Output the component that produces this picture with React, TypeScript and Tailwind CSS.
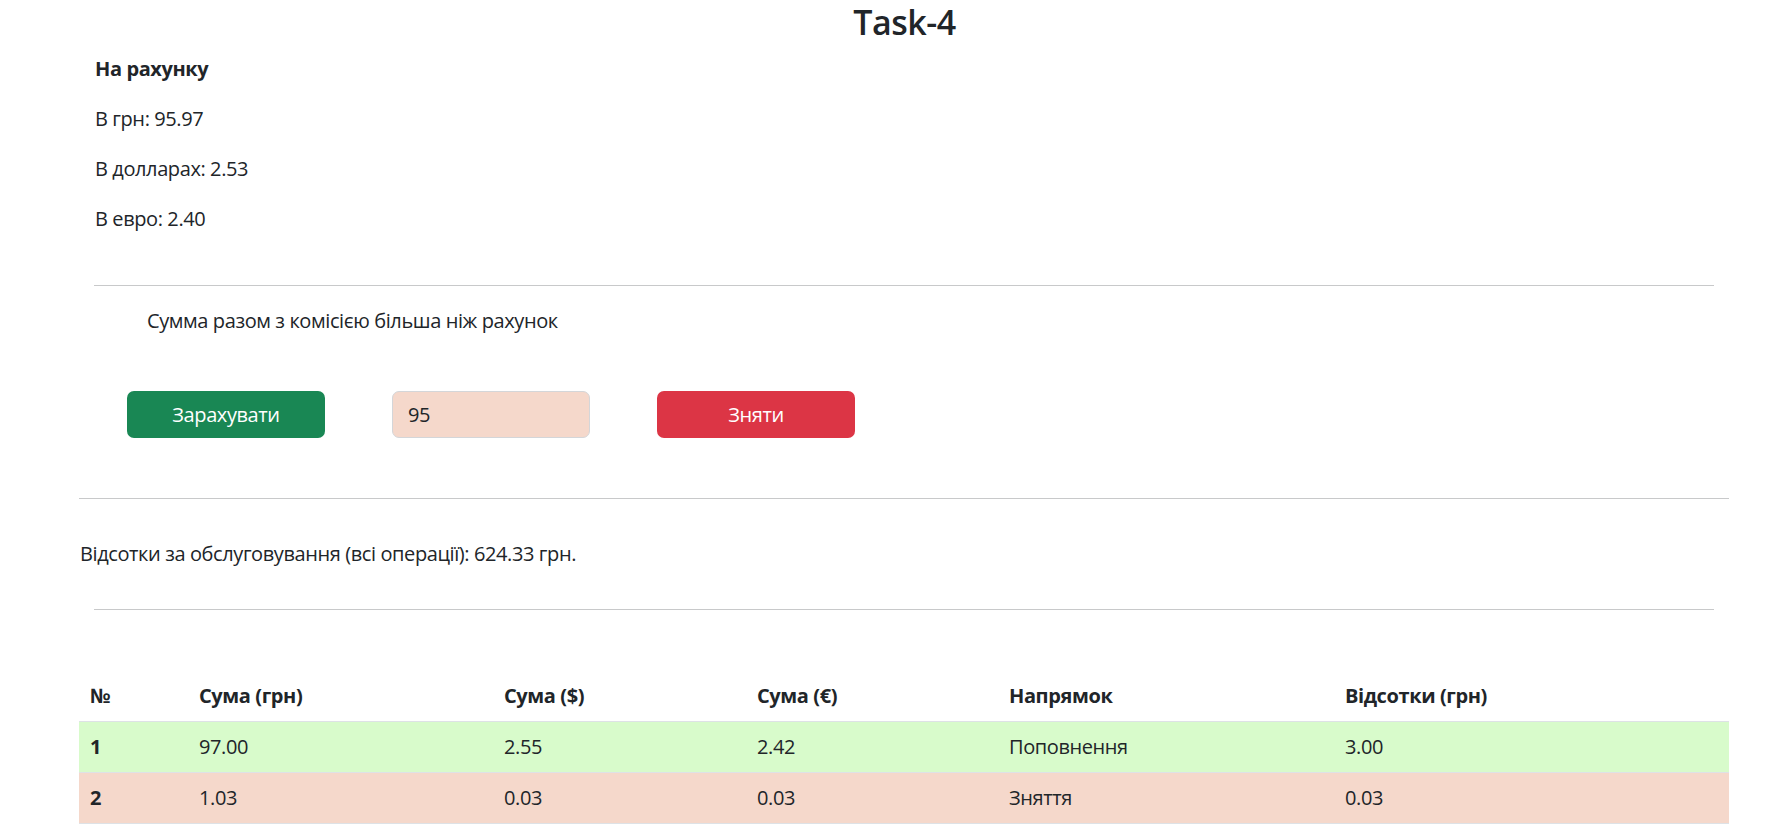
import React from "react";

const rows = [
  { n: "1", uah: "97.00", usd: "2.55", eur: "2.42", dir: "Поповнення", fee: "3.00", bg: "bg-[#d8fbcb]" },
  { n: "2", uah: "1.03", usd: "0.03", eur: "0.03", dir: "Зняття", fee: "0.03", bg: "bg-[#f5d8cb]" },
];

export default function App() {
  return (
    <div className="min-h-screen bg-white text-[#212529] text-[20px] leading-[30px] tracking-[-0.4px] font-['Open_Sans','Noto_Sans',sans-serif]">
      <h1 className="pt-[1px] pl-[18px] text-center text-[34px] leading-[42px] font-semibold tracking-[-0.5px]">Task-4</h1>

      <div className="mt-[11px] pl-[95px]">
        <p className="mb-[20px] font-bold">На рахунку</p>
        <p className="mb-[20px]">В грн: 95.97</p>
        <p className="mb-[20px]">В долларах: 2.53</p>
        <p>В евро: 2.40</p>
      </div>

      <hr className="mt-[51px] ml-[94px] w-[1620px] border-0 border-t border-[#c8c9ca]" />

      <p className="mt-[20px] pl-[147px]">Сумма разом з комісією більша ніж рахунок</p>

      <div className="mt-[55px] flex gap-[67px] pl-[127px]">
        <button className="h-[47px] w-[198px] rounded-[7px] bg-[#198754] text-white">Зарахувати</button>
        <input
          defaultValue="95"
          className="h-[47px] w-[198px] rounded-[7px] border border-[#d4d6d9] bg-[#f5d8cb] px-[15px] text-[#212529] outline-none"
        />
        <button className="h-[47px] w-[198px] rounded-[7px] bg-[#dc3545] text-white">Зняти</button>
      </div>

      <hr className="mt-[60px] ml-[79px] w-[1650px] border-0 border-t border-[#c8c9ca]" />

      <p className="mt-[40px] pl-[80px]">Відсотки за обслуговування (всі операції): 624.33 грн.</p>

      <hr className="mt-[40px] ml-[94px] w-[1620px] border-0 border-t border-[#c8c9ca]" />

      <table className="mt-[61px] ml-[79px] w-[1650px] table-fixed border-collapse text-left">
        <colgroup>
          <col className="w-[109px]" />
          <col className="w-[305px]" />
          <col className="w-[253px]" />
          <col className="w-[252px]" />
          <col className="w-[336px]" />
          <col className="w-[395px]" />
        </colgroup>
        <thead>
          <tr className="border-b border-[#dee2e6]">
            <th className="px-[11px] py-[10px] font-bold">№</th>
            <th className="px-[11px] py-[10px] font-bold">Сума (грн)</th>
            <th className="px-[11px] py-[10px] font-bold">Сума ($)</th>
            <th className="px-[11px] py-[10px] font-bold">Сума (€)</th>
            <th className="px-[11px] py-[10px] font-bold">Напрямок</th>
            <th className="px-[11px] py-[10px] font-bold">Відсотки (грн)</th>
          </tr>
        </thead>
        <tbody>
          {rows.map((r) => (
            <tr key={r.n} className={`border-b border-[#dee2e6] ${r.bg}`}>
              <td className="px-[11px] py-[10px] font-bold">{r.n}</td>
              <td className="px-[11px] py-[10px]">{r.uah}</td>
              <td className="px-[11px] py-[10px]">{r.usd}</td>
              <td className="px-[11px] py-[10px]">{r.eur}</td>
              <td className="px-[11px] py-[10px]">{r.dir}</td>
              <td className="px-[11px] py-[10px]">{r.fee}</td>
            </tr>
          ))}
        </tbody>
      </table>
    </div>
  );
}
